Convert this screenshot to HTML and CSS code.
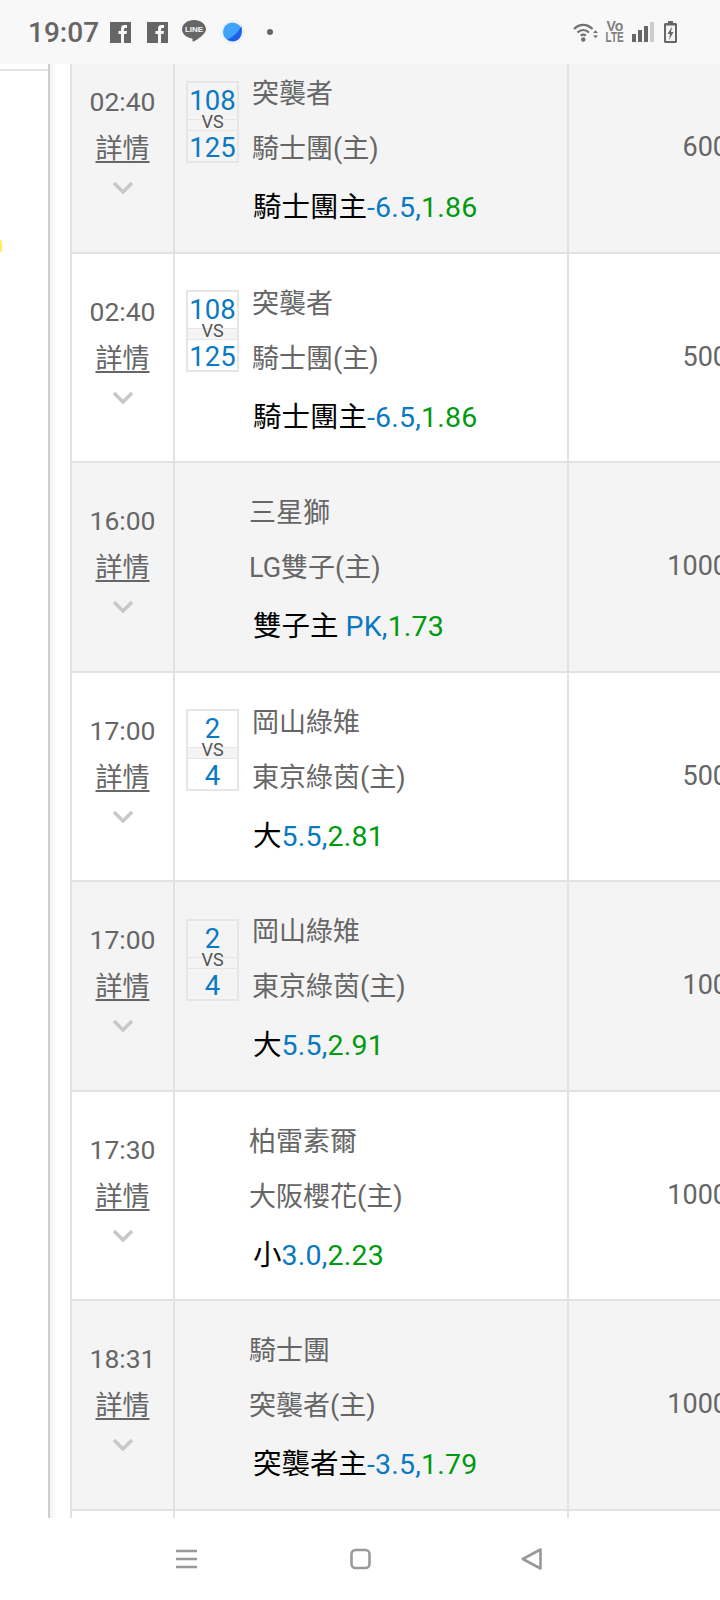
FILE: index.html
```html
<!DOCTYPE html>
<html lang="zh-Hant">
<head>
<meta charset="utf-8">
<title>賽事</title>
<link rel="stylesheet" href="styles.css">
</head>
<body>
<header class="status">
  <span class="clock">19:07</span>
  <svg class="ic fb" viewBox="0 0 21 21"><path d="M0 0h21v21H0z" fill="#666"/><path d="M11 21v-9H8.500V9H11V6.500C11 4 12.500 3 14.500 3H17v3h-1.500C14.500 6 14 6.500 14 7.500V9h3l-.5 3H14v9z" fill="#f8f8f8"/></svg>
  <svg class="ic fb fb2" viewBox="0 0 21 21"><path d="M0 0h21v21H0z" fill="#666"/><path d="M11 21v-9H8.500V9H11V6.500C11 4 12.500 3 14.500 3H17v3h-1.500C14.500 6 14 6.500 14 7.500V9h3l-.5 3H14v9z" fill="#f8f8f8"/></svg>
  <svg class="ic line" viewBox="0 0 24 24"><path d="M12 0C5.400 0 0 4.100 0 9.300c0 4.700 4.300 8.400 10 9.100.8.200.6 1 .5 2-.1 1.100.3 1.400 1.200 1 2.800-1.300 12.300-7 12.300-12.100C24 4.100 18.600 0 12 0z" fill="#666"/><text class="line-text" x="12" y="12.400" text-anchor="middle">LINE</text></svg>
  <svg class="ic app" viewBox="0 0 24 24"><circle cx="12" cy="12" r="12" fill="#f0f1f3"/><circle cx="11.500" cy="12" r="9.500" fill="#3fa2fb"/><path d="M20.300 5.500C19 10 14 16 6.500 19.500c3 2.500 9 2.500 12-1.500 2.500-3.300 2.800-8 1.800-12.500z" fill="#1f5ee8"/></svg>
  <span class="dot"></span>
  <span class="status-right">
    <svg class="ic wifi" viewBox="0 0 25 20"><path d="M1 7c5.500-5.500 13-5.500 18.500 0M4.500 10.500c3.500-3.300 8-3.300 11.500 0M7.800 13.700c1.500-1.300 3.400-1.300 5 0" fill="none" stroke="#707070" stroke-width="2.300"/><circle cx="10.300" cy="17.500" r="2.200" fill="#707070"/><path d="M20 11h5l-2.500-2.800zM20 13.500h5l-2.500 2.800z" fill="#707070"/></svg>
    <span class="volte"><span class="vo">Vo</span><span class="lte">LTE</span></span>
    <svg class="ic signal" viewBox="0 0 22 20"><path d="M0 12h4v8H0zM6 8h4v12H6zM12 4h4v16h-4z" fill="#666"/><path d="M18 0h4v20h-4z" fill="#ccc"/></svg>
    <svg class="ic batt" viewBox="0 0 13 22"><path d="M4 0h5v2h2.500c.8 0 1.500.7 1.500 1.500v17c0 .8-.7 1.500-1.500 1.500h-10C.7 22 0 21.300 0 20.500v-17C0 2.700.7 2 1.500 2H4z" fill="#666"/><path d="M2 4.500h9V20H2z" fill="#f4f4f4"/><path d="M8 5.500L3.500 13H6l-1 6 4.500-8H7z" fill="#666"/></svg>
  </span>
</header>

<main class="view">
  <aside class="side"><span class="mark"></span></aside>
  <div class="gutter"></div>
  <div class="table">

    <section class="row alt">
      <div class="c-time"><span class="time">02:40</span><a class="more">詳情</a><svg class="chev" viewBox="0 0 22 13"><path d="M2 2l9 9 9-9" /></svg></div>
      <div class="c-match has-score">
        <div class="score"><b>108</b><i>VS</i><b>125</b></div>
        <div class="team">突襲者</div><div class="team">騎士團(主)</div>
        <div class="bet">騎士團主<span class="blue">-6.5,</span><span class="green">1.86</span></div>
      </div>
      <div class="c-amt">600</div>
    </section>

    <section class="row">
      <div class="c-time"><span class="time">02:40</span><a class="more">詳情</a><svg class="chev" viewBox="0 0 22 13"><path d="M2 2l9 9 9-9" /></svg></div>
      <div class="c-match has-score">
        <div class="score"><b>108</b><i>VS</i><b>125</b></div>
        <div class="team">突襲者</div><div class="team">騎士團(主)</div>
        <div class="bet">騎士團主<span class="blue">-6.5,</span><span class="green">1.86</span></div>
      </div>
      <div class="c-amt">500</div>
    </section>

    <section class="row alt">
      <div class="c-time"><span class="time">16:00</span><a class="more">詳情</a><svg class="chev" viewBox="0 0 22 13"><path d="M2 2l9 9 9-9" /></svg></div>
      <div class="c-match">
        <div class="team">三星獅</div><div class="team">LG雙子(主)</div>
        <div class="bet">雙子主 <span class="blue">PK,</span><span class="green">1.73</span></div>
      </div>
      <div class="c-amt">1000</div>
    </section>

    <section class="row">
      <div class="c-time"><span class="time">17:00</span><a class="more">詳情</a><svg class="chev" viewBox="0 0 22 13"><path d="M2 2l9 9 9-9" /></svg></div>
      <div class="c-match has-score">
        <div class="score"><b>2</b><i>VS</i><b>4</b></div>
        <div class="team">岡山綠雉</div><div class="team">東京綠茵(主)</div>
        <div class="bet">大<span class="blue">5.5,</span><span class="green">2.81</span></div>
      </div>
      <div class="c-amt">500</div>
    </section>

    <section class="row alt">
      <div class="c-time"><span class="time">17:00</span><a class="more">詳情</a><svg class="chev" viewBox="0 0 22 13"><path d="M2 2l9 9 9-9" /></svg></div>
      <div class="c-match has-score">
        <div class="score"><b>2</b><i>VS</i><b>4</b></div>
        <div class="team">岡山綠雉</div><div class="team">東京綠茵(主)</div>
        <div class="bet">大<span class="blue">5.5,</span><span class="green">2.91</span></div>
      </div>
      <div class="c-amt">100</div>
    </section>

    <section class="row">
      <div class="c-time"><span class="time">17:30</span><a class="more">詳情</a><svg class="chev" viewBox="0 0 22 13"><path d="M2 2l9 9 9-9" /></svg></div>
      <div class="c-match">
        <div class="team">柏雷素爾</div><div class="team">大阪櫻花(主)</div>
        <div class="bet">小<span class="blue">3.0,</span><span class="green">2.23</span></div>
      </div>
      <div class="c-amt">1000</div>
    </section>

    <section class="row alt">
      <div class="c-time"><span class="time">18:31</span><a class="more">詳情</a><svg class="chev" viewBox="0 0 22 13"><path d="M2 2l9 9 9-9" /></svg></div>
      <div class="c-match">
        <div class="team">騎士團</div><div class="team">突襲者(主)</div>
        <div class="bet">突襲者主<span class="blue">-3.5,</span><span class="green">1.79</span></div>
      </div>
      <div class="c-amt">1000</div>
    </section>

    <section class="row">
      <div class="c-time"></div><div class="c-match"></div><div class="c-amt"></div>
    </section>
  </div>
</main>

<nav class="navbar">
  <svg class="nav-ic menu" viewBox="0 0 21 22"><path d="M0 3h21M0 11h21M0 19h21"/></svg>
  <svg class="nav-ic square" viewBox="0 0 21 22"><rect x="1.500" y="2" width="18" height="18" rx="4"/></svg>
  <svg class="nav-ic back" viewBox="0 0 21 22"><path d="M19.500 1.500L1.800 11l17.700 9.500z" stroke-linejoin="round"/></svg>
</nav>
</body>
</html>
```

FILE: styles.css
```css
* { box-sizing: border-box; }
html, body { margin: 0; padding: 0; }
body {
  width: 720px;
  height: 1600px;
  overflow: hidden;
  background: #fff;
  display: flex;
  flex-direction: column;
  font-family: Roboto, "Noto Sans CJK TC", sans-serif;
  color: #666;
}

/* status bar */
.status {
  flex: 0 0 64px;
  background: #f8f8f8;
  display: flex;
  align-items: center;
  padding-left: 28px;
  padding-right: 43px;
}
.clock {
  font-size: 28px;
  font-weight: 500;
  color: #666;
  width: 82px;
}
.ic { display: block; flex: none; }
.fb { width: 21px; height: 21px; }
.fb2 { margin-left: 16px; }
.line { width: 24px; height: 24px; margin-left: 14px; }
.line-text {
  font: 700 8px "Liberation Sans", sans-serif;
  fill: #f8f8f8;
}
.app { width: 24px; height: 24px; margin-left: 15px; }
.dot { width: 6px; height: 6px; border-radius: 50%; background: #666; margin-left: 22px; }
.status-right { margin-left: auto; display: flex; align-items: center; }
.wifi { width: 25px; height: 20px; }
.volte {
  display: flex;
  flex-direction: column;
  align-items: center;
  width: 18px;
  margin-left: 8px;
  font-family: "Liberation Sans", sans-serif;
  font-weight: 700;
  color: #808080;
}
.vo { font-size: 14px; line-height: 11px; }
.lte { font-size: 14px; line-height: 11px; transform: scaleX(0.72); }
.signal { width: 22px; height: 20px; margin-left: 8px; }
.batt { width: 13px; height: 22px; margin-left: 10px; }

/* body */
.view { flex: 1 1 auto; min-height: 0; display: flex; overflow: hidden; }
.side {
  flex: 0 0 48px;
  background: #fff;
  margin-top: 5px;
  border-top: 2px solid #e2e2e2;
  position: relative;
}
.mark {
  position: absolute;
  left: 0;
  top: 169px;
  width: 2px;
  height: 12px;
  border-radius: 0 2px 2px 0;
  background: #ffee55;
}
.gutter {
  flex: 0 0 22px;
  border-left: 2px solid #cfcfcf;
  background: linear-gradient(to right, #f2f2f2, #fff 7px);
}
.table { flex: 0 0 658px; margin-top: -20px; }

.row {
  display: flex;
  height: 209.500px;
  background: #fff;
  border-left: 2px solid #e2e2e2;
  border-bottom: 2px solid #e2e2e2;
}
.alt { background: #f4f4f4; }

.c-time {
  flex: 0 0 103px;
  border-right: 2px solid #e2e2e2;
  display: flex;
  flex-direction: column;
  align-items: center;
  padding-top: 40px;
}
.time { font-size: 26.500px; line-height: 36px; }
.more {
  font-size: 27px;
  line-height: 44px;
  margin-top: 7px;
  text-decoration: underline;
  text-underline-offset: 3px;
}
.chev {
  width: 22px;
  height: 13px;
  margin-top: 10px;
  fill: none;
  stroke: #c8c8c8;
  stroke-width: 3.500;
}

.c-match {
  flex: 0 0 394px;
  border-right: 2px solid #e2e2e2;
  position: relative;
  padding: 23px 0 0 74px;
}
.has-score { padding-left: 77px; }
.team { font-size: 27px; line-height: 55px; white-space: nowrap; }
.bet {
  font-size: 28.500px;
  line-height: 55px;
  margin-top: 3px;
  margin-left: 4px;
  color: #000;
  white-space: nowrap;
}
.has-score .bet { margin-left: 1px; }
.blue { color: #0a79c4; }
.green { color: #009a0e; }
.blue, .green { letter-spacing: 0.2px; }

.score {
  position: absolute;
  left: 11px;
  top: 36.500px;
  width: 53px;
  height: 82px;
  border: 2px solid #e6e6e6;
  background: #fff;
  display: flex;
  flex-direction: column;
  align-items: center;
}
.alt .score { background: #f4f4f4; }
.score b {
  flex: 1;
  width: 100%;
  text-align: center;
  font-size: 27.500px;
  font-weight: 400;
  line-height: 36px;
  color: #0a79c4;
}
.score b:last-child { line-height: 34px; }
.score i {
  flex: 0 0 12px;
  width: 100%;
  text-align: center;
  font-style: normal;
  font-size: 18px;
  line-height: 3px;
  color: #555;
  background: #f4f4f4;
  border-top: 1px solid #e6e6e6;
  border-bottom: 1px solid #e6e6e6;
  overflow: visible;
}

.c-amt {
  flex: 1 1 auto;
  text-align: right;
  font-size: 27px;
  line-height: 36px;
  padding-top: 85px;
  white-space: nowrap;
}

/* navigation bar */
.navbar {
  flex: 0 0 82px;
  background: #fff;
  display: flex;
  padding: 30px 0 0 176px;
}
.nav-ic {
  width: 21px;
  height: 22px;
  fill: none;
  stroke: #999;
  stroke-width: 2.600;
}
.square { margin-left: 153px; }
.back { margin-left: 150px; }
```
